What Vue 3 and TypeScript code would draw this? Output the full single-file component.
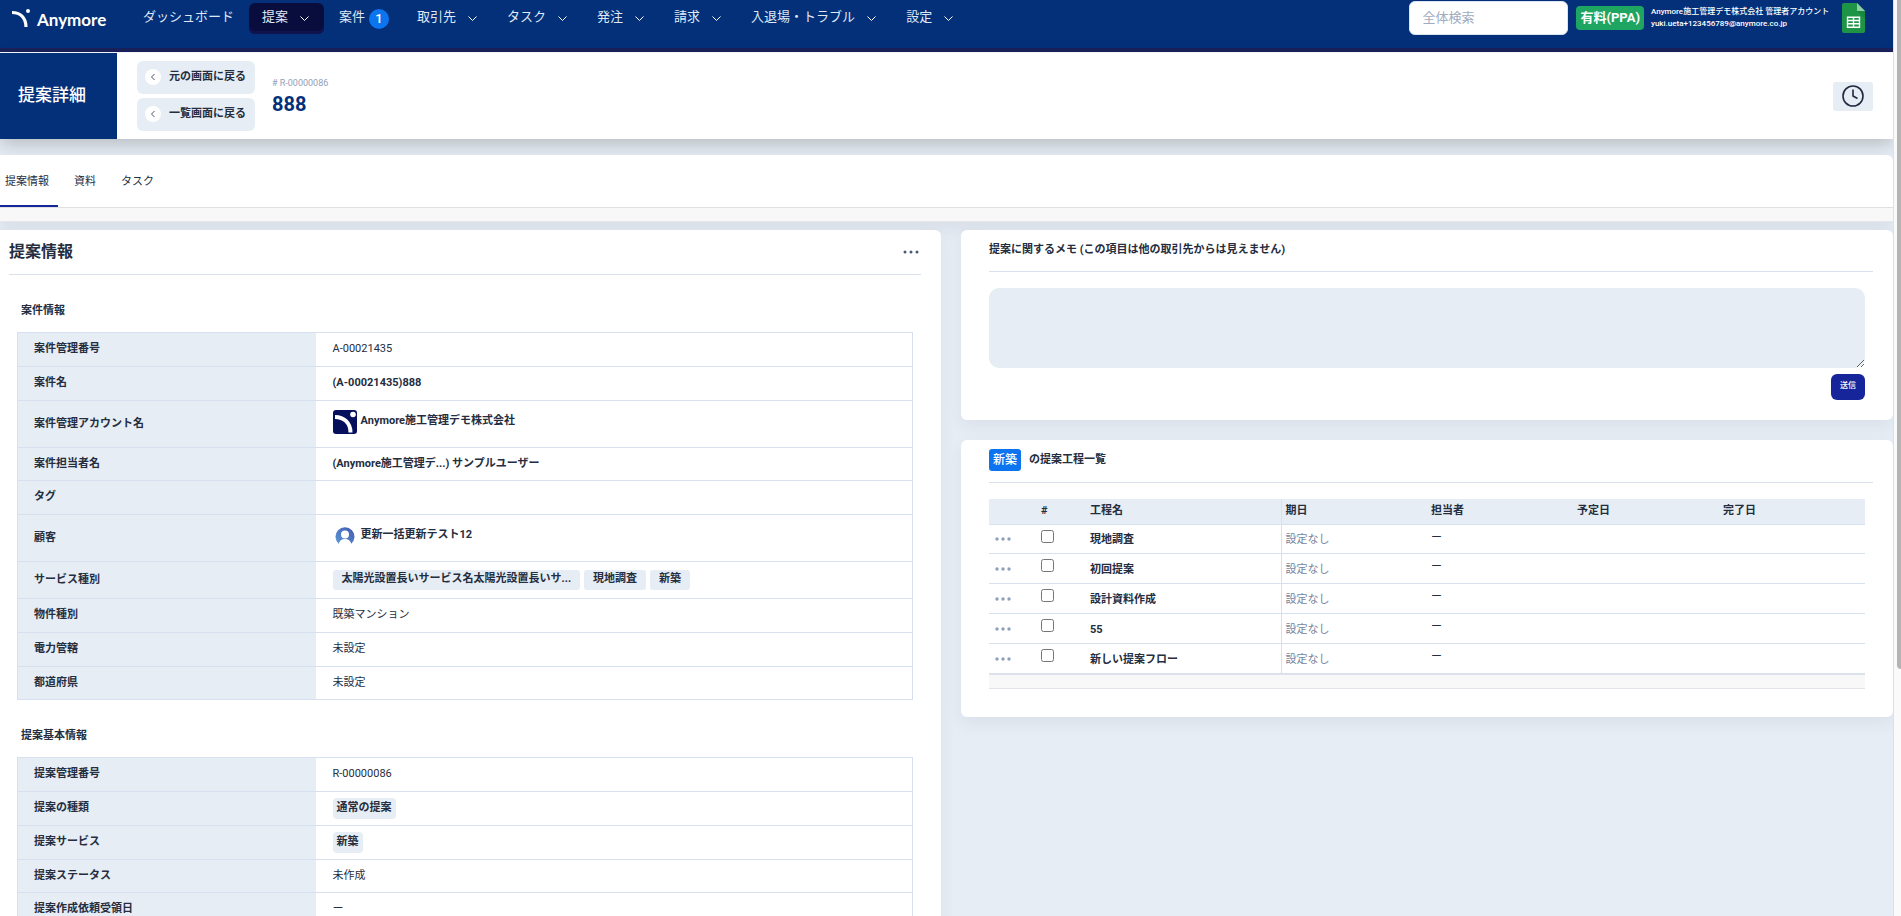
<script setup lang="ts">
import { ref } from 'vue'

interface NavItem { label: string; menu?: boolean; badge?: number; active?: boolean }
interface Row {
  label: string
  value?: string
  kind?: 'text' | 'link' | 'company' | 'person' | 'tags' | 'chip'
  tags?: string[]
  size?: 'tight' | 'tall' | 'roomy'
}
interface Section { title: string; rows: Row[] }

const nav: NavItem[] = [
  { label: 'ダッシュボード' },
  { label: '提案', menu: true, active: true },
  { label: '案件', badge: 1 },
  { label: '取引先', menu: true },
  { label: 'タスク', menu: true },
  { label: '発注', menu: true },
  { label: '請求', menu: true },
  { label: '入退場・トラブル', menu: true },
  { label: '設定', menu: true },
]

const backLinks: string[] = ['元の画面に戻る', '一覧画面に戻る']
const tabs: string[] = ['提案情報', '資料', 'タスク']
const activeTab = ref(0)
const search = ref('')
const memo = ref('')

const sections: Section[] = [
  {
    title: '案件情報',
    rows: [
      { label: '案件管理番号', value: 'A-00021435' },
      { label: '案件名', value: '(A-00021435)888', kind: 'link' },
      { label: '案件管理アカウント名', value: 'Anymore施工管理デモ株式会社', kind: 'company', size: 'tall' },
      { label: '案件担当者名', value: '(Anymore施工管理デ...) サンプルユーザー', kind: 'link', size: 'tight' },
      { label: 'タグ', value: '' },
      { label: '顧客', value: '更新一括更新テスト12', kind: 'person', size: 'tall' },
      { label: 'サービス種別', kind: 'tags', tags: ['太陽光設置長いサービス名太陽光設置長いサ...', '現地調査', '新築'], size: 'roomy' },
      { label: '物件種別', value: '既築マンション' },
      { label: '電力管轄', value: '未設定' },
      { label: '都道府県', value: '未設定', size: 'tight' },
    ],
  },
  {
    title: '提案基本情報',
    rows: [
      { label: '提案管理番号', value: 'R-00000086' },
      { label: '提案の種類', value: '通常の提案', kind: 'chip' },
      { label: '提案サービス', value: '新築', kind: 'chip' },
      { label: '提案ステータス', value: '未作成', size: 'tight' },
      { label: '提案作成依頼受領日', value: 'ー' },
    ],
  },
]

const steps = ref([
  { name: '現地調査', done: false },
  { name: '初回提案', done: false },
  { name: '設計資料作成', done: false },
  { name: '55', done: false },
  { name: '新しい提案フロー', done: false },
])
</script>

<template>
  <div class="shell">
    <div class="page">
      <header class="topbar">
        <a href="#" class="brand">
          <svg class="brand-mark" viewBox="0 0 18 18" aria-hidden="true">
            <path d="M0 3.5C8 3.5 14 8.500 14 18" fill="none" stroke="#fff" stroke-width="3.2" />
            <circle cx="16" cy="2" r="2" fill="#fff" />
          </svg>
          <span>Anymore</span>
        </a>
        <nav class="nav">
          <a v-for="item in nav" :key="item.label" href="#" class="nav-item" :class="{ active: item.active, menu: item.menu }">
            {{ item.label }}
            <svg v-if="item.menu" class="chevron" viewBox="0 0 9 5" aria-hidden="true">
              <path d="M.5.5l4 4 4-4" fill="none" stroke="#fff" />
            </svg>
            <span v-if="item.badge" class="count">{{ item.badge }}</span>
          </a>
        </nav>
        <div class="tools">
          <input v-model="search" class="search" type="search" placeholder="全体検索" aria-label="全体検索" />
          <span class="plan">有料(PPA)</span>
          <div class="account">
            <div>Anymore施工管理デモ株式会社 管理者アカウント</div>
            <div>yuki.ueta+123456789@anymore.co.jp</div>
          </div>
          <a href="#" class="sheet" aria-label="スプレッドシート">
            <svg viewBox="0 0 23 30" aria-hidden="true">
              <path d="M2 0h13l8 8v20a2 2 0 0 1-2 2H2a2 2 0 0 1-2-2V2a2 2 0 0 1 2-2z" fill="#1e9447" />
              <path d="M15 0l8 8h-8z" fill="#8ccfa5" />
              <path d="M15 8h8v8z" fill="#157a3a" opacity=".5" />
              <path d="M5.5 14.2h12v10h-12zM5.5 17.5h12M5.5 20.8h12M11.5 14.2v10" fill="none" stroke="#fff" stroke-width="1.4" />
            </svg>
          </a>
        </div>
      </header>

      <div class="subbar">
        <h1 class="screen">提案詳細</h1>
        <div class="backs">
          <button v-for="b in backLinks" :key="b" type="button" class="back">
            <span class="back-dot">
              <svg viewBox="0 0 16 16" aria-hidden="true"><path d="M9.5 5L6.5 8l3 3" fill="none" stroke="#4a5568" /></svg>
            </span>
            <span>{{ b }}</span>
          </button>
        </div>
        <div class="ident">
          <div class="ident-no"># R-00000086</div>
          <div class="ident-name">888</div>
        </div>
        <button type="button" class="history" aria-label="履歴">
          <svg viewBox="0 0 22 22" aria-hidden="true">
            <circle cx="11" cy="11" r="10" fill="none" stroke="#1f2a40" stroke-width="1.6" />
            <path d="M11 4.5V11l4.5 2.5" fill="none" stroke="#1f2a40" stroke-width="1.6" />
          </svg>
        </button>
      </div>

      <div class="tabcard">
        <div class="tabs" role="tablist">
          <button
            v-for="(t, i) in tabs" :key="t" type="button" role="tab" class="tab"
            :class="{ on: i === activeTab }" :aria-selected="i === activeTab" @click="activeTab = i"
          >{{ t }}</button>
        </div>
        <div class="strip"></div>
      </div>

      <main class="columns">
        <section class="card info">
          <div class="info-head">
            <h2>提案情報</h2>
            <button type="button" class="more" aria-label="メニュー">
              <svg viewBox="0 0 16 4" aria-hidden="true"><g fill="#4a5878"><circle cx="2" cy="2" r="1.5" /><circle cx="8" cy="2" r="1.5" /><circle cx="14" cy="2" r="1.5" /></g></svg>
            </button>
          </div>
          <div v-for="s in sections" :key="s.title" class="section">
            <h3>{{ s.title }}</h3>
            <table class="detail">
              <tbody>
                <tr v-for="r in s.rows" :key="r.label" :class="r.size">
                  <th scope="row">{{ r.label }}</th>
                  <td>
                    <a v-if="r.kind === 'link'" href="#" class="strong">{{ r.value }}</a>
                    <a v-else-if="r.kind === 'company'" href="#" class="strong entity">
                      <svg class="avatar" viewBox="0 0 24 24" aria-hidden="true">
                        <rect width="24" height="24" rx="3" fill="#050f5c" />
                        <path d="M2 7c9 0 15.500 6 15.500 15.500" fill="none" stroke="#fff" stroke-width="4" />
                        <circle cx="20" cy="4.500" r="2.800" fill="#fff" />
                      </svg>
                      <span>{{ r.value }}</span>
                    </a>
                    <a v-else-if="r.kind === 'person'" href="#" class="strong entity">
                      <svg class="avatar" viewBox="0 0 24 24" aria-hidden="true">
                        <defs>
                          <linearGradient id="person" x1="0" y1="1" x2="1" y2="0">
                            <stop offset="0" stop-color="#5b9ad5" /><stop offset="1" stop-color="#4556b0" />
                          </linearGradient>
                        </defs>
                        <path d="M6 20A9.500 9.500 0 1 1 18 20C17.500 17 15.500 15.500 12 15.500S6.500 17 6 20z" fill="url(#person)" />
                        <circle cx="12" cy="10.500" r="4" fill="#fff" />
                        <path d="M6 21c0-4 2.500-6 6-6s6 2 6 6z" fill="#fff" />
                      </svg>
                      <span>{{ r.value }}</span>
                    </a>
                    <div v-else-if="r.kind === 'tags'" class="tags">
                      <span v-for="t in r.tags" :key="t" class="tag">{{ t }}</span>
                    </div>
                    <span v-else-if="r.kind === 'chip'" class="chip">{{ r.value }}</span>
                    <template v-else>{{ r.value }}</template>
                  </td>
                </tr>
              </tbody>
            </table>
          </div>
        </section>

        <div class="side">
          <section class="card memo">
            <label class="side-title" for="memo">提案に関するメモ (この項目は他の取引先からは見えません)</label>
            <div class="side-body">
              <textarea id="memo" v-model="memo"></textarea>
              <button type="button" class="send">送信</button>
            </div>
          </section>

          <section class="card flow">
            <h2 class="side-title"><span class="service">新築</span>の提案工程一覧</h2>
            <div class="side-body">
              <table class="steps">
                <colgroup>
                  <col class="c-menu" /><col class="c-check" /><col class="c-name" /><col /><col /><col /><col />
                </colgroup>
                <thead>
                  <tr>
                    <th></th><th scope="col">#</th><th scope="col" class="split">工程名</th><th scope="col">期日</th>
                    <th scope="col">担当者</th><th scope="col">予定日</th><th scope="col">完了日</th>
                  </tr>
                </thead>
                <tbody>
                  <tr v-for="s in steps" :key="s.name">
                    <td>
                      <button type="button" class="more" :aria-label="s.name + ' メニュー'">
                        <svg viewBox="0 0 16 4" aria-hidden="true"><g fill="#8da0bd"><circle cx="2" cy="2" r="1.700" /><circle cx="8" cy="2" r="1.700" /><circle cx="14" cy="2" r="1.700" /></g></svg>
                      </button>
                    </td>
                    <td class="tick"><input v-model="s.done" type="checkbox" :aria-label="s.name" /></td>
                    <td class="name split">{{ s.name }}</td>
                    <td class="unset">設定なし</td>
                    <td class="dash">ー</td>
                    <td></td>
                    <td></td>
                  </tr>
                </tbody>
              </table>
              <div class="foot"></div>
            </div>
          </section>
        </div>
      </main>
    </div>
    <div class="scroll"><div class="thumb"></div></div>
  </div>
</template>

<style>
body {
  margin: 0;
}
</style>

<style scoped>
.shell {
  display: flex;
  height: 100vh;
  overflow: hidden;
  font-family: Roboto, "Noto Sans CJK JP", sans-serif;
  font-size: 11px;
  line-height: 16px;
  color: #252d40;
  background: #e6edf4;
}
.shell *,
.shell *::before {
  box-sizing: border-box;
}
button,
input,
textarea {
  font: inherit;
  color: inherit;
  border: 0;
  padding: 0;
  margin: 0;
}
button {
  cursor: pointer;
  background: none;
}
a {
  color: inherit;
  text-decoration: none;
}
svg {
  display: block;
}
h1,
h2,
h3 {
  margin: 0;
}
.page {
  flex: 1;
  min-width: 0;
  overflow: hidden;
}
.scroll {
  width: 8px;
  background: #fafafa;
  border-left: 1px solid #e0e0e0;
  padding-left: 3px;
}
.thumb {
  height: 73%;
  background: #b4b4b4;
  border-radius: 0 0 0 4px;
}

/* top navigation */
.topbar {
  display: flex;
  align-items: flex-start;
  height: 52px;
  padding: 0 28px 0 12px;
  background: #04307a;
  border-bottom: 4px solid #1a215c;
  color: #dfe8f5;
  font-size: 13px;
}
.brand {
  display: flex;
  align-items: center;
  gap: 7px;
  width: 118px;
  height: 38px;
  padding-top: 2px;
  color: #fff;
  font-family: Lato, sans-serif;
  font-size: 17px;
  font-weight: 700;
  line-height: 20px;
}
.brand-mark {
  width: 18px;
  height: 18px;
  margin-bottom: 5px;
}
.nav {
  display: flex;
  gap: 2px;
  padding-top: 3px;
  white-space: nowrap;
}
.nav-item {
  display: flex;
  align-items: center;
  height: 31px;
  padding: 0 13px 3px;
  border-radius: 6px;
}
.nav-item.menu {
  gap: 12px;
  padding-right: 15px;
}
.nav-item.active {
  background: #090d3d;
  box-shadow: inset 0 -3px 0 #111350;
}
.chevron {
  width: 9px;
  height: 5px;
  margin-top: 3px;
}
.count {
  width: 20px;
  height: 20px;
  margin: 3px 0 0 4px;
  border-radius: 50%;
  background: #0d74f0;
  color: #fff;
  font-weight: 500;
  line-height: 20px;
  text-align: center;
}
.tools {
  display: flex;
  align-items: center;
  height: 36px;
  margin-left: auto;
}
.search {
  width: 159px;
  height: 34px;
  padding: 0 12px 2px;
  background: #fff;
  border: 1px solid #dbe3ef;
  border-radius: 6px;
  color: #252d40;
}
.search::placeholder {
  color: #a0abc0;
  opacity: 1;
}
.plan {
  margin-left: 8px;
  padding: 0 4px;
  border-radius: 4px;
  background: #1ea562;
  color: #fff;
  font-weight: 700;
  line-height: 24px;
}
.account {
  width: 191px;
  margin-left: 7px;
  color: #fff;
  font-size: 8px;
  font-weight: 500;
  line-height: 12px;
  white-space: nowrap;
}
.sheet svg {
  width: 23px;
  height: 30px;
}

/* record header */
.subbar {
  display: flex;
  align-items: center;
  height: 87px;
  background: #fff;
  border-top: 1px solid #f2f4f7;
  box-shadow: 0 6px 16px rgba(0, 0, 0, 0.2);
}
.screen {
  display: flex;
  align-items: center;
  align-self: stretch;
  width: 117px;
  padding: 0 0 3px 18px;
  background: #04307a;
  color: #fff;
  font-size: 17px;
  font-weight: 500;
}
.backs {
  display: grid;
  gap: 4px;
  margin: 0 17px 0 20px;
}
.back {
  display: flex;
  align-items: center;
  gap: 8px;
  width: 118px;
  height: 33px;
  padding: 0 8px 2px;
  border-radius: 6px;
  background: #e6edf4;
  font-weight: 700;
  white-space: nowrap;
}
.back-dot {
  width: 16px;
  height: 16px;
  border-radius: 50%;
  background: #fff;
}
.ident {
  padding-top: 2px;
}
.ident-no {
  color: #94a0b8;
  font-size: 9px;
  line-height: 14px;
}
.ident-name {
  color: #04307a;
  font-size: 20px;
  font-weight: 700;
  line-height: 28px;
}
.history {
  display: grid;
  place-items: center;
  width: 40px;
  height: 29px;
  margin-left: auto;
  margin-right: 20px;
  border-radius: 3px;
  background: #e6edf4;
}
.history svg {
  width: 22px;
  height: 22px;
}

/* tabs */
.tabcard {
  margin-top: 16px;
  background: #fff;
  border-radius: 0 6px 0 0;
  box-shadow: 0 8px 16px rgba(60, 70, 100, 0.08);
}
.tabs {
  display: flex;
  gap: 7px;
  height: 53px;
  border-bottom: 1px solid #dfe0e4;
}
.tab {
  height: 52px;
  padding: 4px 9px 0;
  border-bottom: 2px solid transparent;
}
.tab:first-child {
  padding-left: 5px;
}
.tab.on {
  border-bottom-color: #16269a;
}
.strip {
  height: 14px;
  background: #f8f8f8;
  border-bottom: 1px solid #e6e6e8;
}

/* cards */
.columns {
  display: grid;
  grid-template-columns: 941fr 932fr;
  gap: 20px;
  align-items: start;
  margin-top: 8px;
}
.card {
  background: #fff;
  border-radius: 6px;
  box-shadow: 0 6px 16px rgba(60, 70, 110, 0.07);
}
.info {
  padding: 0 20px 24px 9px;
  border-top-left-radius: 0;
}
.info-head {
  display: flex;
  align-items: center;
  justify-content: space-between;
  height: 45px;
  padding-right: 2px;
  border-bottom: 1px solid #d9e2ec;
}
.info-head h2 {
  font-size: 16px;
  line-height: 24px;
}
.more {
  display: block;
}
.more svg {
  width: 16px;
  height: 4px;
}
.section {
  padding: 28px 8px 0;
}
.section h3 {
  padding-left: 4px;
  margin-bottom: 13px;
  font-size: 11px;
  line-height: 16px;
  font-weight: 700;
}
.detail {
  width: 100%;
  table-layout: fixed;
  border-collapse: collapse;
  border: 1px solid #d7e0ee;
}
.detail th,
.detail td {
  height: 34px;
  padding: 0 16px 1px;
  border-bottom: 1px solid #d7e0ee;
  text-align: left;
}
.detail td {
  padding-left: 17px;
}
.detail th {
  width: 298px;
  background: #e6edf4;
  font-weight: 700;
}
.detail .tight th,
.detail .tight td {
  height: 33px;
}
.detail .tall th,
.detail .tall td {
  height: 47px;
}
.detail .roomy th,
.detail .roomy td {
  height: 37px;
}
.strong {
  font-weight: 700;
}
.entity {
  display: flex;
  align-items: center;
  gap: 4px;
  padding-bottom: 4px;
}
.entity span {
  padding-bottom: 2px;
}
.avatar {
  width: 24px;
  height: 24px;
}
.tags {
  display: flex;
  gap: 4px;
}
.tag {
  padding: 0 9px 2px;
  border-radius: 3px;
  background: #e6edf4;
  font-weight: 700;
  line-height: 18px;
}
.chip {
  display: inline-block;
  padding: 2px 4px 3px;
  border-radius: 4px;
  background: #e6edf4;
  font-weight: 700;
}

/* right column */
.side {
  display: grid;
  gap: 20px;
}
.memo,
.flow {
  padding: 0 20px 20px 28px;
}
.side-title {
  display: flex;
  align-items: center;
  height: 42px;
  padding-bottom: 2px;
  border-bottom: 1px solid #d9e0ec;
  font-size: 11px;
  font-weight: 700;
}
.flow .side-title {
  height: 43px;
}
.side-body {
  display: flex;
  flex-direction: column;
  align-items: flex-end;
  padding: 16px 8px 0 0;
}
.memo textarea {
  width: 100%;
  height: 80px;
  padding: 8px;
  border-radius: 10px;
  background: #e6edf4;
  resize: vertical;
}
.send {
  width: 34px;
  height: 26px;
  margin-top: 6px;
  padding-bottom: 2px;
  border-radius: 6px;
  background: #16269a;
  color: #fff;
  font-size: 8px;
  font-weight: 500;
}
.service {
  margin-right: 8px;
  padding: 0 4px;
  border-radius: 3px;
  background: #0d74f0;
  color: #fff;
  font-size: 12px;
  font-weight: 500;
  line-height: 22px;
}
.steps {
  width: 100%;
  table-layout: fixed;
  border-collapse: collapse;
}
.c-menu {
  width: 48px;
}
.c-check {
  width: 49px;
}
.c-name {
  width: 195px;
}
.steps th,
.steps td {
  height: 30px;
  padding: 3px 4px 0;
  border-bottom: 1px solid #d7e0ee;
  text-align: left;
}
.steps tbody tr:first-child td {
  height: 29px;
}
.steps th {
  height: 25px;
  padding: 0 4px 1px;
  background: #e6edf4;
  font-weight: 700;
}
.steps .split {
  border-right: 1px solid #d7e0ee;
}
.steps .more {
  padding: 0 2px 2px;
}
.steps .tick input {
  display: block;
  width: 13px;
  height: 13px;
  margin-bottom: 8px;
}
.name {
  font-weight: 700;
}
.unset {
  color: #77839c;
}
.steps .dash {
  padding: 0 4px 2px;
}
.foot {
  width: 100%;
  height: 15px;
  background: #f8f8f8;
  border-top: 1px solid #dfe2e8;
  border-bottom: 1px solid #e2e4ea;
}
.flow {
  padding-bottom: 28px;
}
</style>
